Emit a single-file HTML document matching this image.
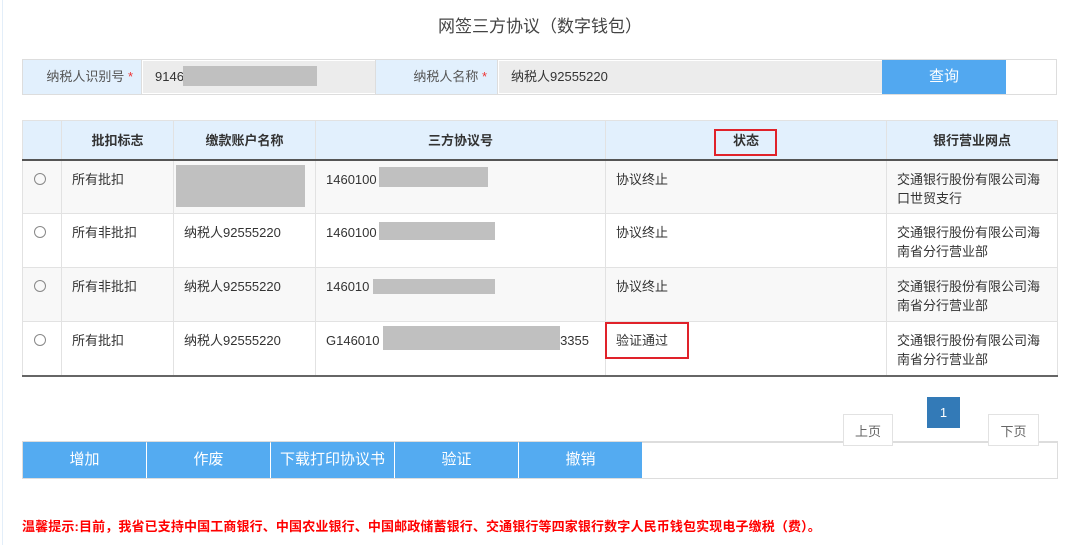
<!DOCTYPE html><html><head><meta charset="utf-8"><style>
*{box-sizing:border-box;margin:0;padding:0}
body{width:1080px;height:545px;background:#fff;position:relative;overflow:hidden;font-family:"Liberation Sans","Noto Sans CJK SC",sans-serif;font-size:13px;color:#333}
.a{position:absolute}
.g{position:absolute;background:#c0c0c0}
table{position:absolute;left:22px;top:120px;width:1036px;border-collapse:collapse;border-bottom:2px solid #666}
td,th{border:1px solid #e2e2e2;vertical-align:top;padding:9px 10px 0;text-align:left;font-weight:normal;line-height:19px}
th{background:#e2f0fd;height:39px;text-align:center;font-weight:bold;padding-top:10px;border-bottom:2px solid #555}
tr.r td{height:54px}
tr.o td{background:#f8f8f8}
.rad{display:inline-block;width:12px;height:12px;border:1px solid #888;border-radius:50%;margin-left:1px;margin-top:3px}
.btn{position:absolute;top:442px;height:36px;width:123px;background:#54abf1;color:#fff;font-size:15px;text-align:center;line-height:36px}
</style></head><body>
<div class="a" style="left:2px;top:0;width:1px;height:545px;background:#e3eef9"></div>
<div class="a" style="left:0;top:12px;width:1080px;text-align:center;font-size:17px;color:#444">网签三方协议（数字钱包）</div>
<div class="a" style="left:22px;top:59px;width:1035px;height:36px;border:1px solid #ddd;background:#fff"></div>
<div class="a" style="left:23px;top:60px;width:119px;height:34px;background:#e2f0fd;border-right:1px solid #ddd;line-height:34px;text-align:right;padding-right:8px;color:#555">纳税人识别号 <span style="color:#e33">*</span></div>
<div class="a" style="left:143px;top:61px;width:232px;height:32px;background:#ececec;line-height:32px;padding-left:12px">9146</div>
<div class="g" style="left:183px;top:66px;width:134px;height:20px"></div>
<div class="a" style="left:375px;top:60px;width:123px;height:34px;background:#e2f0fd;border-left:1px solid #ddd;border-right:1px solid #ddd;line-height:34px;text-align:right;padding-right:10px;color:#555">纳税人名称 <span style="color:#e33">*</span></div>
<div class="a" style="left:499px;top:61px;width:383px;height:32px;background:#ececec;line-height:32px;padding-left:12px">纳税人92555220</div>
<div class="a" style="left:882px;top:60px;width:124px;height:34px;background:#52a8f0;color:#fff;font-size:15px;text-align:center;line-height:34px">查询</div>
<table>
<tr><th style="width:39px"></th><th style="width:112px">批扣标志</th><th style="width:142px">缴款账户名称</th><th style="width:290px">三方协议号</th><th style="width:281px">状态</th><th>银行营业网点</th></tr>
<tr class="r o"><td><span class="rad"></span></td><td>所有批扣</td><td></td><td>1460100</td><td>协议终止</td><td>交通银行股份有限公司海口世贸支行</td></tr>
<tr class="r"><td><span class="rad"></span></td><td>所有非批扣</td><td>纳税人92555220</td><td>1460100</td><td>协议终止</td><td>交通银行股份有限公司海南省分行营业部</td></tr>
<tr class="r o"><td><span class="rad"></span></td><td>所有非批扣</td><td>纳税人92555220</td><td>146010</td><td>协议终止</td><td>交通银行股份有限公司海南省分行营业部</td></tr>
<tr class="r"><td><span class="rad"></span></td><td>所有批扣</td><td>纳税人92555220</td><td>G146010<span style="float:right;margin-right:6px">3355</span></td><td>验证通过</td><td>交通银行股份有限公司海南省分行营业部</td></tr>
</table>
<div class="g" style="left:176px;top:165px;width:129px;height:42px"></div>
<div class="g" style="left:379px;top:167px;width:109px;height:20px"></div>
<div class="g" style="left:379px;top:222px;width:116px;height:18px"></div>
<div class="g" style="left:373px;top:279px;width:122px;height:15px"></div>
<div class="g" style="left:383px;top:326px;width:177px;height:24px"></div>
<div class="a" style="left:714px;top:129px;width:63px;height:27px;border:2px solid #e0222a"></div>
<div class="a" style="left:605px;top:322px;width:84px;height:37px;border:2px solid #e0222a"></div>
<div class="a" style="left:22px;top:441px;width:1036px;height:38px;border:1px solid #ddd;border-top-width:2px"></div>
<div class="btn" style="left:23px">增加</div>
<div class="btn" style="left:147px">作废</div>
<div class="btn" style="left:271px">下载打印协议书</div>
<div class="btn" style="left:395px">验证</div>
<div class="btn" style="left:519px">撤销</div>
<div class="a" style="left:927px;top:397px;width:33px;height:31px;background:#337ab7;color:#fff;text-align:center;line-height:31px;font-size:13px">1</div>
<div class="a" style="left:843px;top:414px;width:50px;height:32px;border:1px solid #e2e2e2;background:#fff;text-align:center;line-height:34px;color:#666">上页</div>
<div class="a" style="left:988px;top:414px;width:51px;height:32px;border:1px solid #e2e2e2;background:#fff;text-align:center;line-height:34px;color:#666">下页</div>
<div class="a" style="left:22px;top:516px;color:#f00;font-size:13px;font-weight:bold;letter-spacing:0.13px">温馨提示:目前，我省已支持中国工商银行、中国农业银行、中国邮政储蓄银行、交通银行等四家银行数字人民币钱包实现电子缴税（费）。</div>
</body></html>
